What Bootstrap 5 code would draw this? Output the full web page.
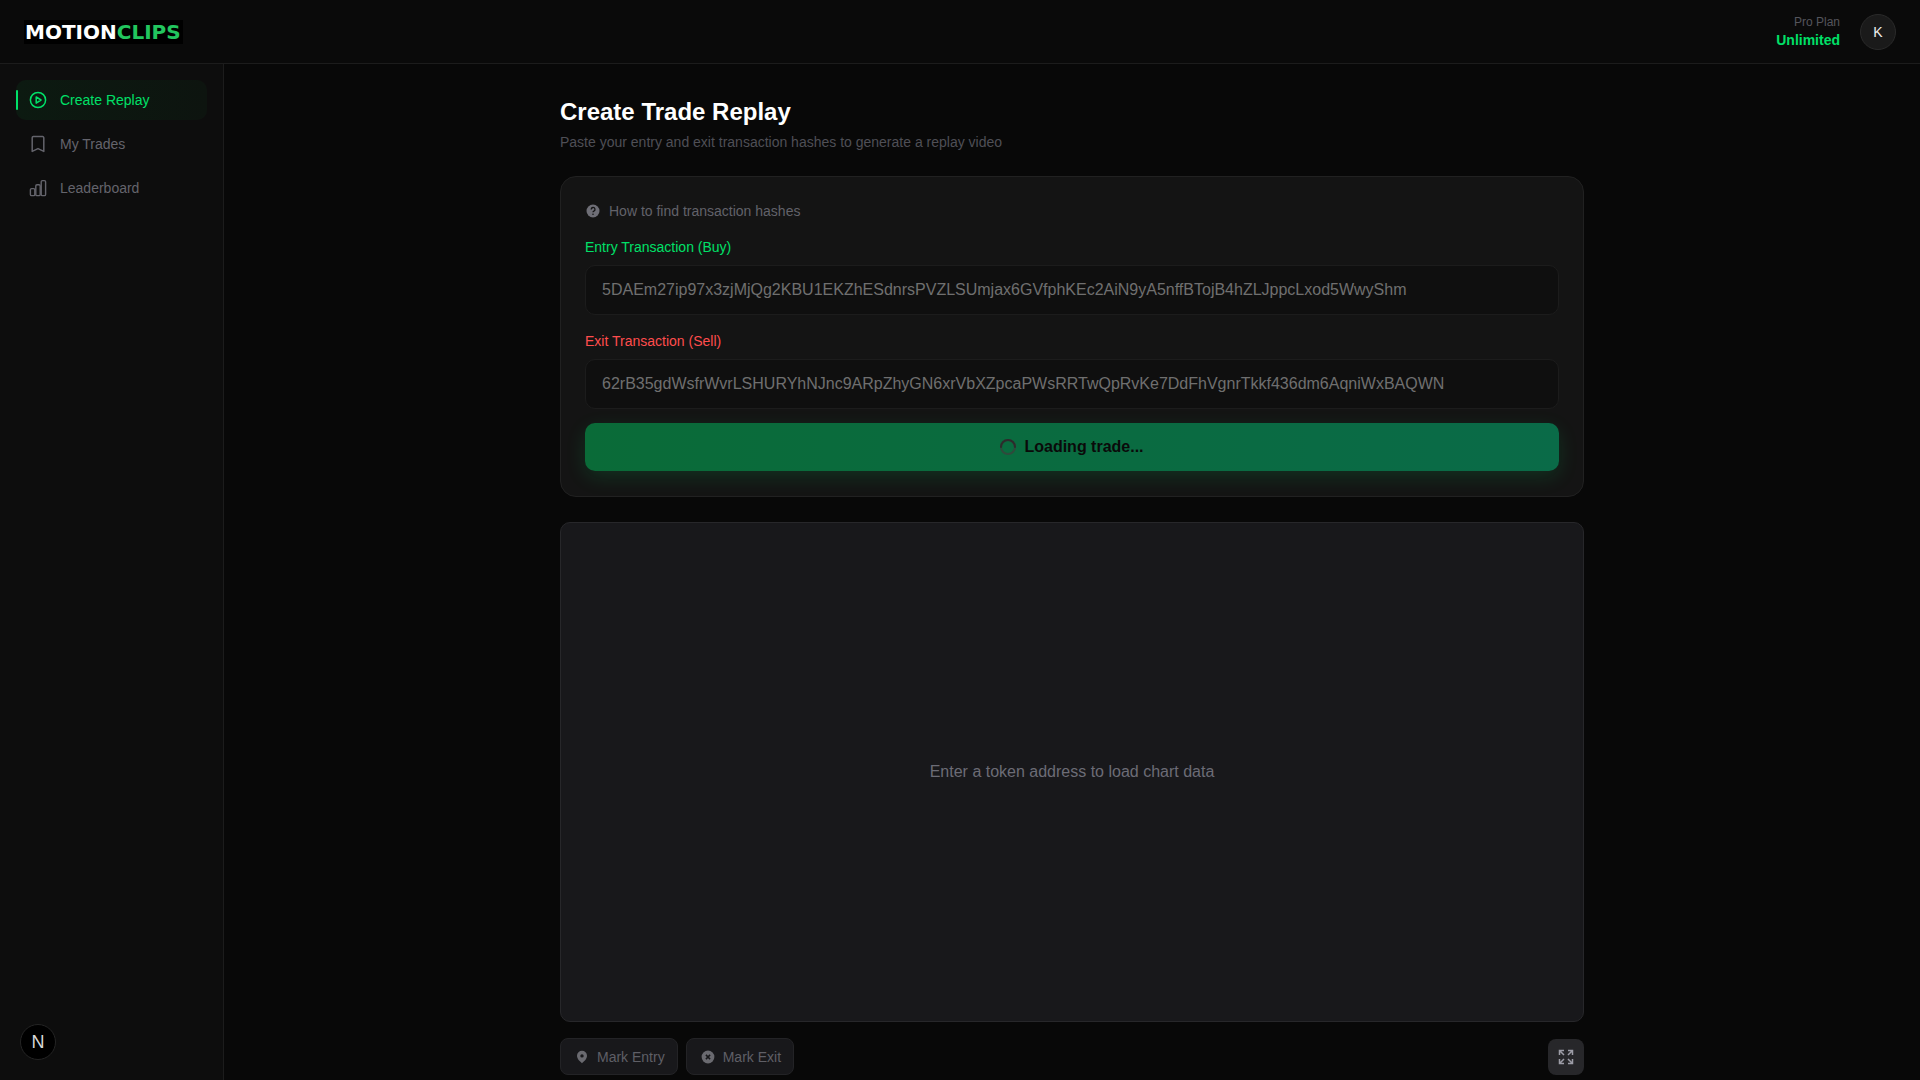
<!DOCTYPE html>
<html>
  <head>
    <title>Create Trade Replay</title>
    <link rel="stylesheet" href="https://cdn.jsdelivr.net/npm/bootstrap@5.3.3/dist/css/bootstrap.min.css" />
    <style>
      html, body { height: 100%; }
      body { background: #080808; color: #fff; font-family: "Liberation Sans", Arial, sans-serif; font-size: 14px; overflow: hidden; }
      .top-bar { height: 64px; background: #0a0a0a; border-bottom: 1px solid #1c1c1c; padding: 0 24px; }
      .logo-mark { background: #000; width: 159px; height: 24px; font-family: "DejaVu Sans", sans-serif; font-weight: 700; font-size: 20px; line-height: 24px; white-space: nowrap; padding-left: 1px; }
      .logo-mark span { color: #22c55e; }
      .plan-name { font-size: 12px; line-height: 16px; color: #55555c; }
      .plan-value { font-size: 14px; line-height: 20px; font-weight: 700; color: #00e068; }
      .plan-box { margin-right: 4px; }
      .avatar-dot { width: 36px; height: 36px; background: #1a1a1a; border: 1px solid #2a2a2a; font-weight: 500; color: #eee; padding-top: 1px; }
      .page-body { height: 1016px; }
      .side-bar { width: 224px; background: #0d0d0d; border-right: 1px solid #1c1c1c; padding: 16px; }
      .side-link { height: 40px; padding-left: 12px; gap: 12px; color: #64646c; border-radius: 10px; margin-bottom: 4px; text-decoration: none; }
      .side-link svg { width: 20px; height: 20px; flex-shrink: 0; }
      .side-link.is-active { color: #00e068; background: linear-gradient(90deg, #0c1a11, #0d140f); }
      .side-link.is-active::before { content: ""; position: absolute; left: 0; top: 10px; width: 2px; height: 20px; background: #00e068; border-radius: 2px; }
      .dev-badge { left: 20px; bottom: 20px; width: 36px; height: 36px; background: #000; border: 1px solid #242424; font-size: 18px; color: #d8d8d8; }
      .main-pane { min-width: 0; }
      .content-col { width: 1024px; padding-top: 32px; }
      .page-title { font-size: 24px; line-height: 32px; font-weight: 700; margin: 0 0 4px; }
      .page-sub { line-height: 20px; color: #4f4f56; margin: 0 0 24px; }
      .form-panel { background: #141414; border: 1px solid #212121; border-radius: 16px; padding: 24px 24px 25px; margin-bottom: 25px; }
      .help-line { line-height: 20px; color: #62626a; gap: 8px; margin-bottom: 16px; }
      .help-line svg { width: 14px; height: 14px; margin: 0 1px; }
      .hash-label { display: block; line-height: 20px; margin-bottom: 8px; }
      .hash-label.buy { color: #00e068; }
      .hash-label.sell { color: #ff4d4d; }
      .hash-input.form-control, .hash-input.form-control:disabled { height: 50px; background: #0f0f0f; border: 1px solid #1c1c1c; border-radius: 10px; color: #6f6f6f; padding: 12px 16px; font-size: 16px; line-height: 24px; opacity: 1; margin-bottom: 16px; }
      .hash-input.last-hash.form-control { margin-bottom: 14px; }
      .load-btn.btn, .load-btn.btn:disabled { width: 100%; height: 48px; background: linear-gradient(90deg, #0a6b38, #0a6b48); border: 0; border-radius: 10px; color: #0a0a0a; font-weight: 700; font-size: 16px; opacity: 1; gap: 8px; box-shadow: 0 6px 20px rgba(0, 224, 104, .14); }
      .spin-ring { width: 16px; height: 16px; }
      .chart-panel { height: 500px; background: #18181b; border: 1px solid #27272a; border-radius: 10px; color: #6c6c76; font-size: 16px; margin-bottom: 16px; }
      .mark-btn.btn { height: 37px; background: #18181b; border: 1px solid #232326; border-radius: 8px; color: #5f5f66; font-size: 14px; padding: 1px 12px 0 14px; gap: 8px; }
      .mark-btn svg { width: 14px; height: 14px; margin-top: -1px; }
      .expand-btn.btn { width: 36px; height: 36px; background: #27272a; border: 0; border-radius: 8px; padding: 0; }
      .expand-btn svg { width: 16px; height: 16px; }
    </style>
  </head>
  <body>
    <header class="top-bar d-flex align-items-center justify-content-between">
      <div class="logo-mark">MOTION<span>CLIPS</span></div>
      <div class="d-flex align-items-center gap-3">
        <div class="plan-box text-end">
          <div class="plan-name">Pro Plan</div>
          <div class="plan-value">Unlimited</div>
        </div>
        <div class="avatar-dot rounded-circle d-flex align-items-center justify-content-center">K</div>
      </div>
    </header>

    <div class="page-body d-flex">
      <aside class="side-bar position-relative flex-shrink-0">
        <a class="side-link is-active position-relative d-flex align-items-center" href="#">
          <svg viewBox="0 0 20 20" fill="none" stroke="currentColor" stroke-width="1.5" stroke-linejoin="round">
            <circle cx="10" cy="10" r="7.6" />
            <path d="M8.2 6.9 L13 10 L8.2 13.1 Z" />
          </svg>
          Create Replay
        </a>
        <a class="side-link d-flex align-items-center" href="#">
          <svg viewBox="0 0 20 20" fill="none" stroke="currentColor" stroke-width="1.5" stroke-linejoin="round">
            <path d="M4.2 3.8 a1.2 1.2 0 0 1 1.2-1.2 h9.2 a1.2 1.2 0 0 1 1.2 1.2 V17.4 L10 14.6 L4.2 17.4 Z" />
          </svg>
          My Trades
        </a>
        <a class="side-link d-flex align-items-center" href="#">
          <svg viewBox="0 0 20 20" fill="none" stroke="currentColor" stroke-width="1.4" stroke-linejoin="round">
            <rect x="2.4" y="10.6" width="4.4" height="7" rx="1.2" />
            <rect x="7.8" y="6.8" width="4.4" height="10.8" rx="1.2" />
            <rect x="13.2" y="2.6" width="4.4" height="15" rx="1.2" />
          </svg>
          Leaderboard
        </a>
        <div class="dev-badge position-absolute rounded-circle d-flex align-items-center justify-content-center">N</div>
      </aside>

      <main class="main-pane flex-grow-1 d-flex justify-content-center">
        <div class="content-col">
          <h1 class="page-title">Create Trade Replay</h1>
          <p class="page-sub">Paste your entry and exit transaction hashes to generate a replay video</p>

          <section class="form-panel">
            <div class="help-line d-flex align-items-center">
              <svg viewBox="0 0 14 14">
                <circle cx="7" cy="7" r="6.5" fill="#6e6e76" />
                <path d="M5.2 5.4 a1.9 1.9 0 1 1 2.7 1.7 c-.6.3-.9.6-.9 1.2" fill="none" stroke="#141414" stroke-width="1.3" />
                <circle cx="7" cy="10.3" r=".8" fill="#141414" />
              </svg>
              How to find transaction hashes
            </div>
            <label class="hash-label buy" for="entryHash">Entry Transaction (Buy)</label>
            <input class="hash-input form-control" id="entryHash" type="text" disabled value="5DAEm27ip97x3zjMjQg2KBU1EKZhESdnrsPVZLSUmjax6GVfphKEc2AiN9yA5nffBTojB4hZLJppcLxod5WwyShm" />
            <label class="hash-label sell" for="exitHash">Exit Transaction (Sell)</label>
            <input class="hash-input last-hash form-control" id="exitHash" type="text" disabled value="62rB35gdWsfrWvrLSHURYhNJnc9ARpZhyGN6xrVbXZpcaPWsRRTwQpRvKe7DdFhVgnrTkkf436dm6AqniWxBAQWN" />
            <button class="load-btn btn d-flex align-items-center justify-content-center" type="button" disabled>
              <svg class="spin-ring" viewBox="0 0 16 16" fill="none" stroke-width="2" stroke-linecap="round">
                <circle cx="8" cy="8" r="7" stroke="#2f4a3c" />
                <path d="M1 8 A7 7 0 0 1 15 8" stroke="#2c2c2c" />
              </svg>
              Loading trade...
            </button>
          </section>

          <section class="chart-panel d-flex align-items-center justify-content-center">Enter a token address to load chart data</section>

          <div class="d-flex align-items-center justify-content-between">
            <div class="d-flex gap-2">
              <button class="mark-btn btn d-flex align-items-center" type="button">
                <svg viewBox="0 0 14 14">
                  <path fill-rule="evenodd" fill="#6a6a70" d="M7 .8 a5 5 0 0 1 5 5 c0 3.2-3.2 6-5 7.4 c-1.8-1.4-5-4.2-5-7.4 a5 5 0 0 1 5-5 Z M7 4.2 a1.7 1.7 0 1 0 0 3.4 a1.7 1.7 0 0 0 0-3.4 Z" />
                </svg>
                Mark Entry
              </button>
              <button class="mark-btn btn d-flex align-items-center" type="button">
                <svg viewBox="0 0 14 14">
                  <circle cx="7" cy="7" r="6.4" fill="#6a6a70" />
                  <path d="M4.9 4.9 L9.1 9.1 M9.1 4.9 L4.9 9.1" stroke="#18181b" stroke-width="1.5" />
                </svg>
                Mark Exit
              </button>
            </div>
            <button class="expand-btn btn d-flex align-items-center justify-content-center" type="button">
              <svg viewBox="0 0 16 16" fill="none" stroke="#9c9ca6" stroke-width="1.5">
                <path d="M1.5 6 V1.5 H6 M1.5 1.5 L6 6" />
                <path d="M14.5 6 V1.5 H10 M14.5 1.5 L10 6" />
                <path d="M1.5 10 V14.5 H6 M1.5 14.5 L6 10" />
                <path d="M14.5 10 V14.5 H10 M14.5 14.5 L10 10" />
              </svg>
            </button>
          </div>
        </div>
      </main>
    </div>

    <script src="https://cdn.jsdelivr.net/npm/bootstrap@5.3.3/dist/js/bootstrap.bundle.min.js"></script>
  </body>
</html>
